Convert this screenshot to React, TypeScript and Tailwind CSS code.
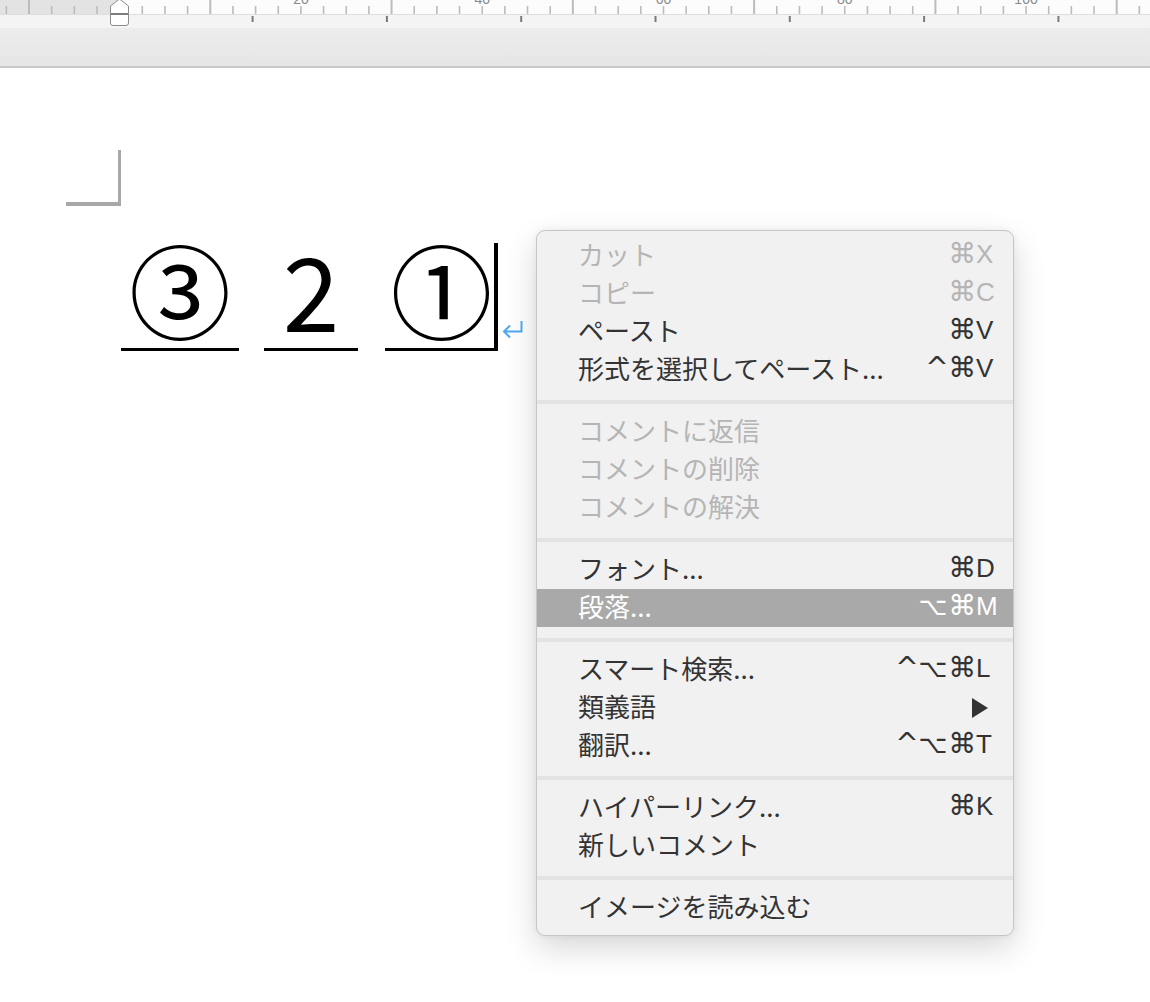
import React from "react";

type Item =
  | { sep: true }
  | {
      sep?: false;
      label: string;
      mods?: string[];
      k?: string;
      disabled?: boolean;
      hl?: boolean;
      arrow?: boolean;
    };

const items: Item[] = [
  { label: "カット", mods: ["⌘"], k: "X", disabled: true },
  { label: "コピー", mods: ["⌘"], k: "C", disabled: true },
  { label: "ペースト", mods: ["⌘"], k: "V" },
  { label: "形式を選択してペースト...", mods: ["^", "⌘"], k: "V" },
  { sep: true },
  { label: "コメントに返信", disabled: true },
  { label: "コメントの削除", disabled: true },
  { label: "コメントの解決", disabled: true },
  { sep: true },
  { label: "フォント...", mods: ["⌘"], k: "D" },
  { label: "段落...", mods: ["⌥", "⌘"], k: "M", hl: true },
  { sep: true },
  { label: "スマート検索...", mods: ["^", "⌥", "⌘"], k: "L" },
  { label: "類義語", arrow: true },
  { label: "翻訳...", mods: ["^", "⌥", "⌘"], k: "T" },
  { sep: true },
  { label: "ハイパーリンク...", mods: ["⌘"], k: "K" },
  { label: "新しいコメント" },
  { sep: true },
  { label: "イメージを読み込む" },
];

function ModCell({ m }: { m: string }) {
  if (m === "^")
    return (
      <span className="flex w-[18px] justify-center font-['DejaVu_Sans',sans-serif] text-[28px] leading-none">^</span>
    );
  if (m === "⌥")
    return (
      <span className="flex w-[26px] justify-center font-['DejaVu_Sans',sans-serif] text-[25px] leading-none">⌥</span>
    );
  return (
    <span className="flex w-[25px] justify-center font-['DejaVu_Sans',sans-serif] text-[28px] leading-none">⌘</span>
  );
}

function Ruler() {
  const ticks: React.ReactNode[] = [];
  const labels: Record<number, string> = { 12: "20", 20: "40", 28: "60", 36: "80", 44: "100" };
  for (let i = -1; i <= 50; i++) {
    const x = 29 + 22.66 * i;
    if (x > 1150) break;
    const major = ((i % 8) + 8) % 8 === 0;
    ticks.push(
      <line
        key={"t" + i}
        x1={x}
        x2={x}
        y1={major ? 0 : 6}
        y2={14}
        stroke="#bcbcbc"
        strokeWidth={major ? 2 : 1.6}
      />
    );
    if (labels[i]) {
      ticks.push(
        <text
          key={"l" + i}
          x={x}
          y={3.5}
          textAnchor="middle"
          fontSize={14}
          fill="#8a8a8a"
          fontFamily="Liberation Sans, sans-serif"
        >
          {labels[i]}
        </text>
      );
    }
  }
  const tabs: React.ReactNode[] = [];
  for (let k = 1; k <= 7; k++) {
    const x = 118.3 + 134.3 * k;
    tabs.push(<line key={"tab" + k} x1={x} x2={x} y1={16} y2={22} stroke="#7a7a7a" strokeWidth={2} />);
  }
  return (
    <svg width="1150" height="28" viewBox="0 0 1150 28" className="block">
      <rect x="0" y="0" width="1150" height="14" fill="#fcfcfc" />
      <rect x="0" y="0" width="119" height="14" fill="#e3e3e3" />
      {ticks}
      <rect x="0" y="14" width="1150" height="1" fill="#dedede" />
      <rect x="0" y="15" width="1150" height="13" fill="#f4f4f4" />
      {tabs}
      <path d="M110.5,13.5 L110.5,6 L119.5,-1 L128.5,6 L128.5,13.5 Z" fill="#ffffff" stroke="#8c8c8c" strokeWidth="1" />
      <path
        d="M110.5,14.5 L128.5,14.5 L128.5,23 Q128.5,25.5 126,25.5 L113,25.5 Q110.5,25.5 110.5,23 Z"
        fill="#ffffff"
        stroke="#8c8c8c"
        strokeWidth="1"
      />
      <line x1="110.5" x2="128.5" y1="14" y2="14" stroke="#777" strokeWidth="1.5" />
    </svg>
  );
}

function Menu() {
  return (
    <div className="absolute left-[536px] top-[230px] w-[478px] rounded-[9px] border border-[#c6c6c6] bg-[#f1f1f1] pt-[6px] pb-[8px] shadow-[0_12px_32px_rgba(0,0,0,0.16),0_0_6px_rgba(0,0,0,0.06)] font-['Noto_Sans_CJK_JP','DejaVu_Sans',sans-serif]">
      {items.map((it, idx) => {
        if (it.sep) {
          return (
            <div key={idx} className="h-[24px] pt-[11px]">
              <div className="h-[4px] bg-[#e3e3e3]" />
            </div>
          );
        }
        const color = it.hl ? "text-white" : it.disabled ? "text-[#b5b5b5]" : "text-[#333333]";
        return (
          <div
            key={idx}
            className={`flex h-[38px] items-center pb-[4px] pl-[41px] pr-[12px] ${it.hl ? "bg-[#a9a9a9]" : ""} ${color}`}
          >
            <span className="flex-1 text-[26px] leading-none">{it.label}</span>
            {it.arrow ? (
              <svg width="17" height="20" viewBox="0 0 17 20" className="mr-[12px] mt-[4px]">
                <polygon points="0,0 16,10 0,20" fill="#333333" />
              </svg>
            ) : it.k ? (
              <span className="flex items-center">
                <span className="flex items-center gap-[4px]">
                  {it.mods?.map((m, i) => (
                    <ModCell key={i} m={m} />
                  ))}
                </span>
                <span className="w-[26px] pl-[1px] font-['Liberation_Sans',sans-serif] text-[26px] leading-none">
                  {it.k}
                </span>
              </span>
            ) : null}
          </div>
        );
      })}
    </div>
  );
}

export default function App() {
  return (
    <div className="relative h-[1002px] w-[1150px] overflow-hidden bg-white">
      <Ruler />
      <div className="h-[40px] border-b-2 border-[#c9c9c9] bg-gradient-to-b from-[#ececec] to-[#e6e6e6]" />
      <div className="pt-[82px]">
        <div className="ml-[66px] h-[56px] w-[55px] border-b-[4px] border-r-[3px] border-[#a8a8a8]" />
        <div className="mt-[31px] ml-[121px] flex items-end font-['Noto_Sans_CJK_JP',sans-serif] text-[102px] font-normal leading-none text-black">
          <div className="flex w-[118px] justify-center border-b-[3px] border-black pb-[9px]">③</div>
          <div className="ml-[25px] flex w-[94px] justify-center border-b-[3px] border-black pb-[9px]">2</div>
          <div className="ml-[27px] flex h-[108px] w-[113px] items-end justify-center border-b-[3px] border-r-[4px] border-black pb-[9px] pl-[4px]">
            ①
          </div>
          <svg width="22" height="19" viewBox="0 0 22 19" className="mb-[12px] ml-[4px]">
            <path d="M19.5,1 V11.5 H2.5 M8,5.5 L2,11.5 L8,17.5" fill="none" stroke="#4fa9f2" strokeWidth="2" />
          </svg>
        </div>
      </div>
      <Menu />
    </div>
  );
}
